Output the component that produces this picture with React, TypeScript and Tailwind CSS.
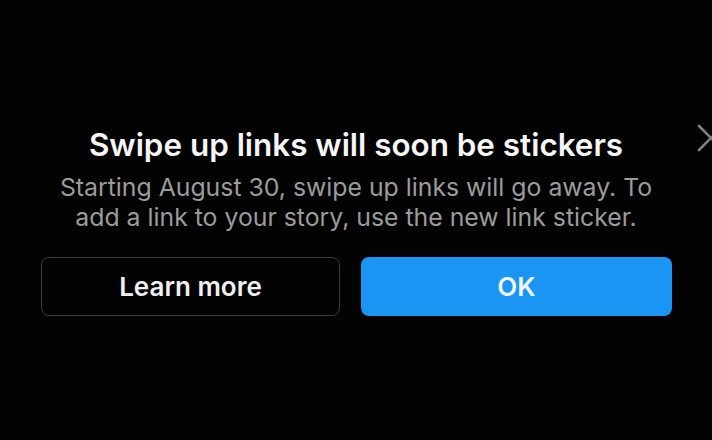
export default function App() {
  return (
    <div className="relative h-[440px] w-[712px] overflow-hidden bg-[#030303] font-['Inter',sans-serif]">
      <div className="flex flex-col items-center pt-[126px]">
        <h1 className="whitespace-nowrap text-[31.4px] font-semibold leading-[38px] text-[#f5f5f5]">
          Swipe up links will soon be stickers
        </h1>
        <p className="mt-[8px] whitespace-nowrap text-center text-[24.8px] leading-[30px] text-[#9b9b9b]">
          Starting August 30, swipe up links will go away. To
          <br />
          add a link to your story, use the new link sticker.
        </p>
        <div className="mt-[25px] flex w-full gap-[21px] pl-[41px]">
          <button
            type="button"
            className="h-[59px] w-[299px] rounded-[8px] border border-[#3c3c3c] text-[26px] font-semibold text-[#f0f0f0]"
          >
            Learn more
          </button>
          <button
            type="button"
            className="h-[59px] w-[311px] rounded-[8px] bg-[#1a95f4] text-[26px] font-semibold text-[#f0f8ff]"
          >
            OK
          </button>
        </div>
      </div>
      <svg
        className="absolute left-[697px] top-[124px] h-[28px] w-[28px]"
        viewBox="0 0 28 28"
        fill="none"
        stroke="#808080"
        strokeWidth="2.6"
        strokeLinecap="round"
      >
        <path d="M2 2 L26 26 M26 2 L2 26" />
      </svg>
    </div>
  );
}
